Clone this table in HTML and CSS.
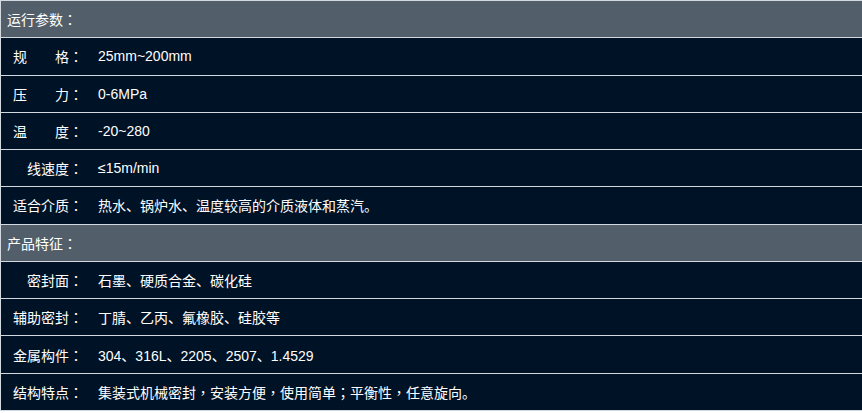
FILE: index.html
```html
<!DOCTYPE html>
<html>
<head>
    <meta charset="UTF-8">
    <link rel="stylesheet" href="styles.css">
</head>
<body>
    <div class="param-box">
        <div class="row head">运行参数<span class="colon">：</span></div>
        <div class="row"><span class="label">规　　格<span class="colon">：</span></span><span class="value">25mm~200mm</span></div>
        <div class="row"><span class="label">压　　力<span class="colon">：</span></span><span class="value">0-6MPa</span></div>
        <div class="row"><span class="label">温　　度<span class="colon">：</span></span><span class="value">-20~280</span></div>
        <div class="row"><span class="label">线速度<span class="colon">：</span></span><span class="value">≤15m/min</span></div>
        <div class="row"><span class="label">适合介质<span class="colon">：</span></span><span class="value">热水、锅炉水、温度较高的介质液体和蒸汽。</span></div>
        <div class="row head">产品特征<span class="colon">：</span></div>
        <div class="row"><span class="label">密封面<span class="colon">：</span></span><span class="value">石墨、硬质合金、碳化硅</span></div>
        <div class="row"><span class="label">辅助密封<span class="colon">：</span></span><span class="value">丁腈、乙丙、氟橡胶、硅胶等</span></div>
        <div class="row"><span class="label">金属构件<span class="colon">：</span></span><span class="value">304、316L、2205、2507、1.4529</span></div>
        <div class="row"><span class="label">结构特点<span class="colon">：</span></span><span class="value">集装式机械密封<span class="colon">，</span>安装方便<span class="colon">，</span>使用简单<span class="colon">；</span>平衡性<span class="colon">，</span>任意旋向。</span></div>
    </div>
</body>
</html>
```

FILE: styles.css
```css
body {
    margin: 0;
    background: #ffffff;
    overflow: hidden;
}

.param-box {
    width: 880px;
    border-top: 1px solid #d3d9e0;
    border-left: 1px solid #d3d9e0;
    background: #d3d9e0;
    font-family: "Liberation Sans", "Noto Sans CJK SC", sans-serif;
    font-size: 14px;
    color: #ffffff;
}

.row {
    display: flex;
    align-items: center;
    height: 36.27px;
    border-bottom: 1px solid #d3d9e0;
    background: #001226;
}

.row.head {
    background: #525f6b;
    padding-left: 6px;
}

.label {
    width: 82px;
    padding-right: 7px;
    text-align: right;
    flex-shrink: 0;
}

.value {
    padding-left: 8px;
}

/* full-width punctuation sits centred in its box */
.colon {
    font-family: "Noto Sans CJK TC", sans-serif;
}
```
